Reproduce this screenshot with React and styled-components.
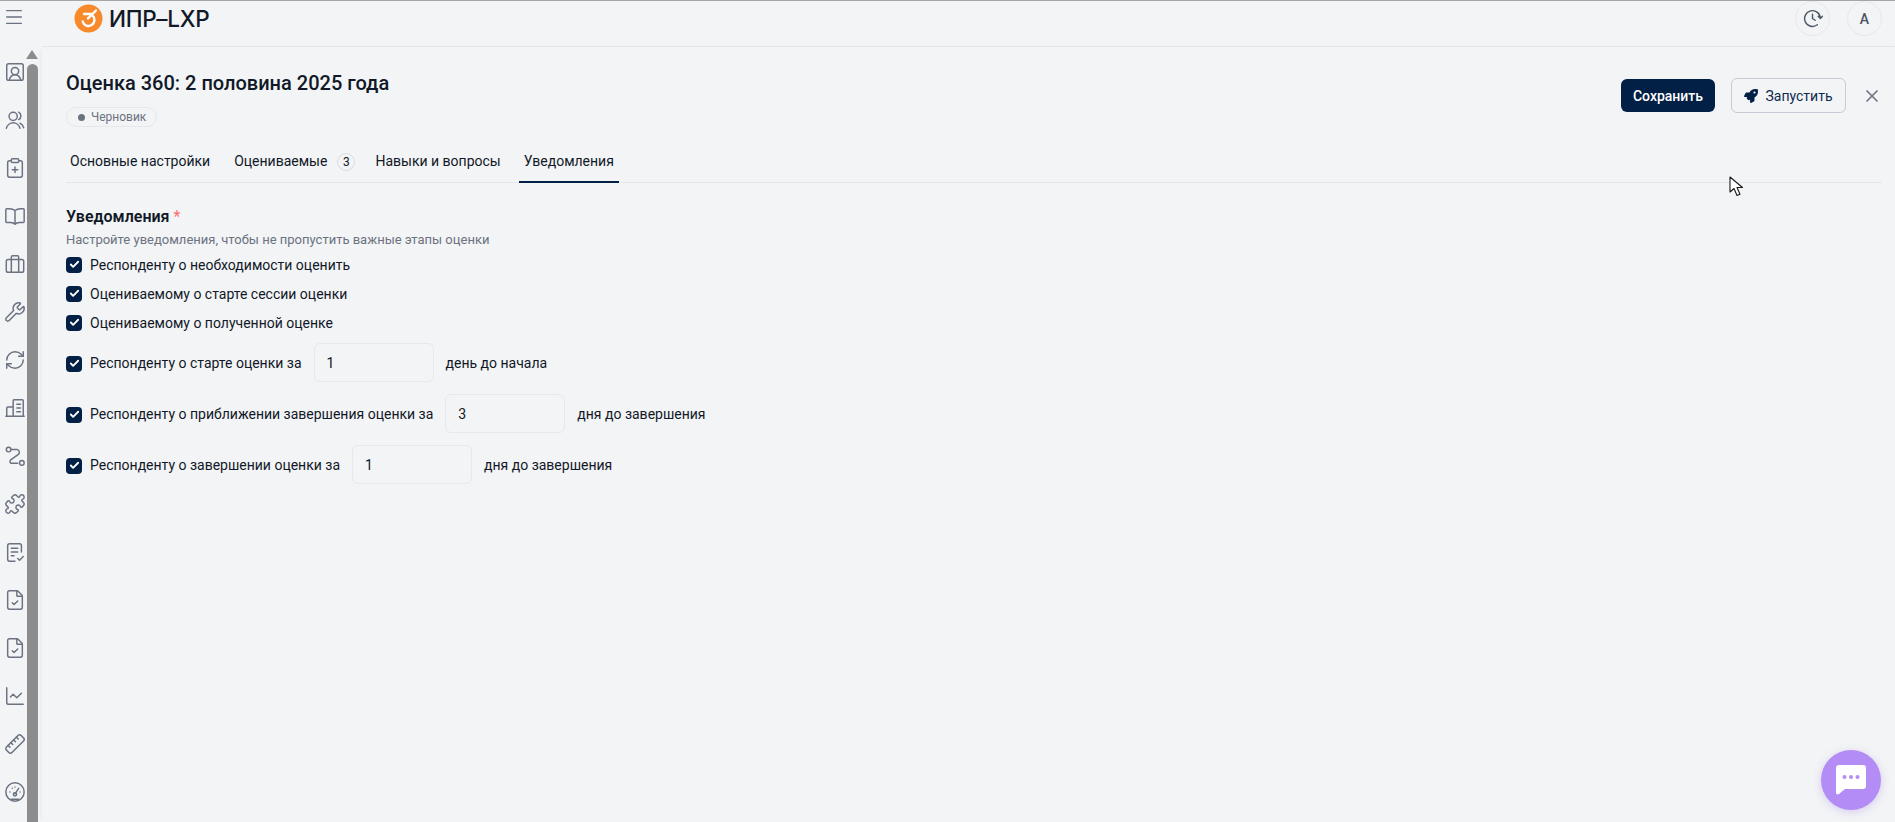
import React from "react";
import styled, { createGlobalStyle } from "styled-components";
import {
  SquareUserRound,
  ClipboardPlus,
  Wrench,
  RefreshCw,
  Puzzle,
  FileCheck,
  ChartLine,
  Ruler,
  Menu,
  X,
  Check,
} from "lucide-react";
import { FaRocket } from "react-icons/fa";

const GlobalStyle = createGlobalStyle`
  html, body {
    margin: 0;
    height: 100%;
    overflow: hidden;
    background: #f3f4f6;
  }
  body {
    font-family: Roboto, "Liberation Sans", sans-serif;
    color: #111827;
  }
`;

const Shell = styled.div`
  width: 1895px;
  height: 822px;
  display: flex;
  border-top: 1px solid #a6a6a6;
  box-sizing: border-box;
  overflow: hidden;
  position: relative;
`;

const Sidebar = styled.aside`
  width: 42px;
  flex-shrink: 0;
  display: grid;
  grid-template-columns: 26px 12px 4px;
  grid-template-rows: 37px 1fr;
`;

const Burger = styled.div`
  grid-column: 1 / 4;
  padding: 5px 0 0 3px;
  color: #6b7280;
  display: flex;

  svg {
    width: 22px;
    height: 22px;
  }
`;

const NavList = styled.nav`
  display: flex;
  flex-direction: column;
  align-items: center;
  gap: 26px;
  padding: 23px 0 0 3px;
  color: #6b7280;

  svg {
    width: 22px;
    height: 22px;
    flex-shrink: 0;
  }
`;

const MirroredRuler = styled(Ruler)`
  transform: scaleX(-1);
`;

const ScrollTrack = styled.div`
  display: flex;
  flex-direction: column;
  align-items: center;
  padding-top: 12px;
  gap: 5px;
`;

const ScrollArrow = styled.div`
  width: 0;
  height: 0;
  border-left: 6px solid transparent;
  border-right: 6px solid transparent;
  border-bottom: 9px solid #8c8c8c;
`;

const ScrollThumb = styled.div`
  width: 11px;
  flex: 1;
  background: #8c8c8c;
  border-radius: 6px 6px 0 0;
`;

const Right = styled.div`
  flex: 1;
  min-width: 0;
  display: flex;
  flex-direction: column;
`;

const Header = styled.header`
  height: 46px;
  flex-shrink: 0;
  display: flex;
  align-items: center;
  justify-content: space-between;
  padding: 0 13px 10px 32px;
  box-sizing: border-box;
  border-bottom: 1px solid #e5e7eb;
`;

const Logo = styled.div`
  display: flex;
  align-items: center;
  gap: 6px;
`;

const LogoText = styled.span`
  font-family: Inter, sans-serif;
  font-size: 22.5px;
  font-weight: 500;
  letter-spacing: -0.3px;
  color: #111827;
`;

const HeaderActions = styled.div`
  display: flex;
  gap: 17px;
`;

const RoundButton = styled.div`
  width: 35px;
  height: 35px;
  border-radius: 50%;
  border: 1px solid #e7e8ec;
  box-sizing: border-box;
  display: flex;
  align-items: center;
  justify-content: center;
  color: #4b5563;
  font-size: 14px;
  font-weight: 500;

  svg {
    width: 21px;
    height: 21px;
  }
`;

const Main = styled.main`
  flex: 1;
  padding: 0 13px 0 24px;
  box-shadow: -3px 0 4px -2px rgba(0, 0, 0, 0.05);
`;

const TitleRow = styled.div`
  display: flex;
  justify-content: space-between;
  align-items: flex-start;
  height: 86px;
`;

const TitleBlock = styled.div`
  padding-top: 24px;
`;

const Title = styled.h1`
  margin: 0;
  font-size: 20px;
  line-height: 24px;
  font-weight: 500;
  color: #111827;
`;

const StatusChip = styled.div`
  display: inline-flex;
  align-items: center;
  gap: 6px;
  height: 20px;
  margin-top: 12px;
  padding: 0 10px 0 11px;
  box-sizing: border-box;
  border: 1px solid #e5e7eb;
  border-radius: 10px;
  font-size: 12px;
  color: #6b7280;
`;

const StatusDot = styled.span`
  width: 7px;
  height: 7px;
  border-radius: 50%;
  background: #6b7280;
`;

const Actions = styled.div`
  display: flex;
  align-items: center;
  padding-top: 31px;
`;

const SaveButton = styled.button`
  width: 94px;
  height: 33px;
  border: none;
  border-radius: 6px;
  background: #021f45;
  color: #fff;
  font: 500 14px Roboto, sans-serif;
`;

const RunButton = styled.button`
  width: 115px;
  height: 35px;
  margin-left: 16px;
  display: flex;
  align-items: center;
  justify-content: center;
  gap: 7px;
  background: transparent;
  border: 1px solid #c5ccd6;
  border-radius: 6px;
  color: #0f2a4d;
  font: 400 14px Roboto, sans-serif;

  svg {
    width: 14px;
    height: 14px;
    color: #021f45;
  }
`;

const CloseButton = styled.div`
  width: 36px;
  display: flex;
  justify-content: flex-end;
  color: #6b7280;

  svg {
    width: 20px;
    height: 20px;
  }
`;

const Tabs = styled.div`
  display: flex;
  align-items: stretch;
  height: 50px;
  box-sizing: border-box;
  border-bottom: 1px solid #e5e7eb;
`;

const Tab = styled.div`
  display: flex;
  align-items: center;
  gap: 10px;
  padding: 8px 5px 0 ${({ $left }) => $left}px;
  margin-right: ${({ $gap }) => $gap}px;
  margin-bottom: -1px;
  height: 50px;
  box-sizing: border-box;
  font-size: 14px;
  color: #111827;
  border-bottom: 2px solid ${({ $active }) => ($active ? "#021f45" : "transparent")};
`;

const TabBadge = styled.span`
  width: 18px;
  height: 18px;
  box-sizing: border-box;
  border: 1px solid #d9dce2;
  border-radius: 50%;
  display: flex;
  align-items: center;
  justify-content: center;
  font-size: 12px;
  margin-top: 2px;
`;

const Section = styled.section`
  padding-top: 24px;
`;

const SectionTitle = styled.h2`
  margin: 0;
  font-size: 16px;
  line-height: 20px;
  font-weight: 600;
  color: #111827;
`;

const Required = styled.span`
  color: #f87171;
  margin-left: 4px;
  font-weight: 400;
`;

const SectionHint = styled.p`
  margin: 4px 0 1px;
  font-size: 13px;
  line-height: 18px;
  color: #6b7280;
`;

const OptionList = styled.div`
  display: flex;
  flex-direction: column;
`;

const Option = styled.label`
  display: flex;
  align-items: center;
  height: ${({ $tall }) => ($tall ? 51 : 29)}px;
  font-size: 14px;
  color: #111827;
`;

const CheckBox = styled.span`
  width: 16px;
  height: 16px;
  flex-shrink: 0;
  margin-right: 8px;
  margin-top: ${({ $tall }) => ($tall ? 2 : 0)}px;
  border-radius: 4px;
  background: #021f45;
  color: #fff;
  display: flex;
  align-items: center;
  justify-content: center;

  svg {
    width: 11px;
    height: 11px;
    stroke-width: 4;
  }
`;

const NumberField = styled.div`
  width: 120px;
  height: 39px;
  box-sizing: border-box;
  margin: 0 12px;
  padding-left: 12px;
  border: 1px solid #e7e8ec;
  border-radius: 6px;
  display: flex;
  align-items: center;
  font-size: 14px;
`;

const ChatButton = styled.div`
  position: absolute;
  right: 14px;
  bottom: 12px;
  width: 60px;
  height: 60px;
  border-radius: 50%;
  background: #b38cf5;
  box-shadow: 0 2px 8px rgba(120, 90, 220, 0.25);
  display: flex;
  align-items: center;
  justify-content: center;
`;

const Cursor = styled.svg`
  position: absolute;
  left: 1729px;
  top: 175px;
  width: 14px;
  height: 21px;
`;

const Glyph = ({ d, children }) => (
  <svg
    viewBox="0 0 24 24"
    fill="none"
    stroke="currentColor"
    strokeWidth="1.6"
    strokeLinecap="round"
    strokeLinejoin="round"
  >
    {d && <path d={d} />}
    {children}
  </svg>
);

const UsersIcon = () => (
  <Glyph d="M2.5 21c1-3.6 4.300-6 7.500-6s6.500 2.400 7.500 6M16 3.500a4.500 4.500 0 0 1 0 8M17.500 15.500c2 .8 3.400 2.700 4 5">
    <circle cx="10" cy="8" r="4.500" />
  </Glyph>
);

const BookIcon = () => (
  <Glyph d="M12 6c-1.500-1.300-3.500-2-6-2H3a1 1 0 0 0-1 1v13a1 1 0 0 0 1 1h4c2 0 4 .7 5 2 1-1.300 3-2 5-2h4a1 1 0 0 0 1-1V5a1 1 0 0 0-1-1h-3c-2.500 0-4.500.7-6 2zM12 6v15" />
);

const BriefcaseIcon = () => (
  <Glyph d="M8 7V4.500A1.500 1.500 0 0 1 9.500 3h5A1.500 1.500 0 0 1 16 4.500V7M8 7v14M16 7v14">
    <rect x="2.500" y="7" width="19" height="14" rx="2" />
  </Glyph>
);

const BuildingIcon = () => (
  <Glyph d="M2 21h20M3 21v-9a1 1 0 0 1 1-1h6M10 21V4a1 1 0 0 1 1-1h9a1 1 0 0 1 1 1v17M14 8h4M14 12h4M14 16h4" />
);

const RouteIcon = () => (
  <Glyph d="M8 5h6a3 3 0 0 1 2 5l-9 6.500a2.200 2.200 0 0 0 1 3.500h7">
    <circle cx="5" cy="5" r="2.500" />
    <circle cx="19.500" cy="19.500" r="2.500" />
  </Glyph>
);

const ReportIcon = () => (
  <Glyph d="M19 12V5a2 2 0 0 0-2-2H6a2 2 0 0 0-2 2v15a2 2 0 0 0 2 2h6M8 8h7M8 12h7M8 16h3M15 19l2 2 4-4" />
);

const GaugeIcon = () => (
  <Glyph d="M12 14l4-6M8 20h8M6.500 12h.01M9 8h.01M12 6.500h.01M17.500 12h.01">
    <circle cx="12" cy="12" r="10" />
    <circle cx="12" cy="14.500" r="1.800" />
  </Glyph>
);

const HistoryIcon = () => (
  <Glyph d="M17.500 19.200A9 9 0 1 1 21 12M18.500 9.500 21 12l2.500-2.500M12 7v5l3 2" />
);

const navIcons = [
  <SquareUserRound strokeWidth={1.6} />,
  <UsersIcon />,
  <ClipboardPlus strokeWidth={1.6} />,
  <BookIcon />,
  <BriefcaseIcon />,
  <Wrench strokeWidth={1.6} />,
  <RefreshCw strokeWidth={1.6} />,
  <BuildingIcon />,
  <RouteIcon />,
  <Puzzle strokeWidth={1.6} />,
  <ReportIcon />,
  <FileCheck strokeWidth={1.6} />,
  <FileCheck strokeWidth={1.6} />,
  <ChartLine strokeWidth={1.6} />,
  <MirroredRuler strokeWidth={1.6} />,
  <GaugeIcon />,
];

const options = [
  { label: "Респонденту о необходимости оценить" },
  { label: "Оцениваемому о старте сессии оценки" },
  { label: "Оцениваемому о полученной оценке" },
  { label: "Респонденту о старте оценки за", value: 1, suffix: "день до начала" },
  { label: "Респонденту о приближении завершения оценки за", value: 3, suffix: "дня до завершения" },
  { label: "Респонденту о завершении оценки за", value: 1, suffix: "дня до завершения" },
];

const LogoMark = () => (
  <svg width="29" height="29" viewBox="0 0 29 29">
    <circle cx="14.500" cy="14.500" r="14" fill="#f98a2b" />
    <path
      d="M8.700 17.500A6 6 0 1 0 18.400 11.400M10 10H18.500L14 14.300M18.500 10L22 6.500"
      fill="none"
      stroke="#fff"
      strokeWidth="2.400"
      strokeLinecap="round"
      strokeLinejoin="round"
    />
  </svg>
);

const ChatIcon = () => (
  <svg width="32" height="32" viewBox="0 0 32 32">
    <path
      d="M4 1h24a3 3 0 0 1 3 3v18a3 3 0 0 1-3 3H10l-6 5c-1 .8-3 .5-3-1V4a3 3 0 0 1 3-3z"
      fill="#fff"
    />
    <circle cx="9.500" cy="13" r="2" fill="#b38cf5" />
    <circle cx="16" cy="13" r="2" fill="#b38cf5" />
    <circle cx="22.500" cy="13" r="2" fill="#b38cf5" />
  </svg>
);

const App = () => {
  return (
    <>
      <GlobalStyle />
      <Shell>
        <Sidebar>
          <Burger>
            <Menu strokeWidth={1.5} />
          </Burger>
          <NavList>
            {navIcons.map((icon, index) => (
              <React.Fragment key={index}>{icon}</React.Fragment>
            ))}
          </NavList>
          <ScrollTrack>
            <ScrollArrow />
            <ScrollThumb />
          </ScrollTrack>
        </Sidebar>
        <Right>
          <Header>
            <Logo>
              <LogoMark />
              <LogoText>ИПР–LXP</LogoText>
            </Logo>
            <HeaderActions>
              <RoundButton>
                <HistoryIcon />
              </RoundButton>
              <RoundButton>A</RoundButton>
            </HeaderActions>
          </Header>
          <Main>
            <TitleRow>
              <TitleBlock>
                <Title>Оценка 360: 2 половина 2025 года</Title>
                <StatusChip>
                  <StatusDot />
                  Черновик
                </StatusChip>
              </TitleBlock>
              <Actions>
                <SaveButton>Сохранить</SaveButton>
                <RunButton>
                  <FaRocket />
                  Запустить
                </RunButton>
                <CloseButton>
                  <X strokeWidth={2} />
                </CloseButton>
              </Actions>
            </TitleRow>
            <Tabs>
              <Tab $left={4} $gap={14}>Основные настройки</Tab>
              <Tab $left={5} $gap={10}>
                Оцениваемые <TabBadge>3</TabBadge>
              </Tab>
              <Tab $left={5} $gap={13}>Навыки и вопросы</Tab>
              <Tab $left={5} $active>Уведомления</Tab>
            </Tabs>
            <Section>
              <SectionTitle>
                Уведомления<Required>*</Required>
              </SectionTitle>
              <SectionHint>Настройте уведомления, чтобы не пропустить важные этапы оценки</SectionHint>
              <OptionList>
                {options.map((option) => (
                  <Option key={option.label} $tall={option.suffix}>
                    <CheckBox $tall={option.suffix}>
                      <Check />
                    </CheckBox>
                    {option.label}
                    {option.suffix && (
                      <>
                        <NumberField>{option.value}</NumberField>
                        {option.suffix}
                      </>
                    )}
                  </Option>
                ))}
              </OptionList>
            </Section>
          </Main>
        </Right>
        <ChatButton>
          <ChatIcon />
        </ChatButton>
        <Cursor viewBox="0 0 14 21">
          <path
            d="M1 1v15l4-3.500 3 7 3-1.300-3-6.700h5.500z"
            fill="#fff"
            stroke="#1a1a1a"
            strokeWidth="1.100"
            strokeLinejoin="round"
          />
        </Cursor>
      </Shell>
    </>
  );
};

export default App;
